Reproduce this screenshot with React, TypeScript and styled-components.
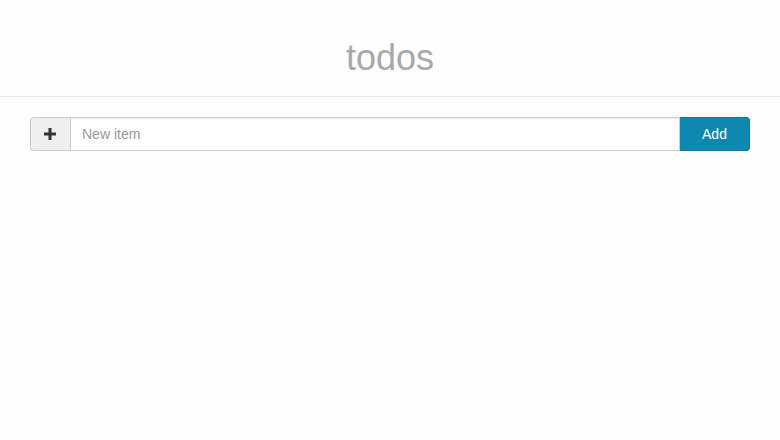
import styled, { createGlobalStyle } from "styled-components";

const Global = createGlobalStyle`
  html, body {
    margin: 0;
    padding: 0;
    background: #fefefe;
    font-family: "Liberation Sans", Arial, Helvetica, sans-serif;
    font-size: 14px;
    color: #333;
  }
`;

const Header = styled.header`
  height: 96px;
  border-bottom: 1px solid #e6e6e6;
  display: flex;
  align-items: center;
  justify-content: center;
`;

const Title = styled.h1`
  margin: 0;
  padding-top: 20px;
  font-size: 36px;
  font-weight: 400;
  color: #a9a9a9;
  line-height: 1;
`;

const Main = styled.main`
  padding: 20px 30px;
`;

const InputGroup = styled.form`
  display: flex;
  height: 34px;
`;

const Addon = styled.span`
  width: 39px;
  display: flex;
  align-items: center;
  justify-content: center;
  background: #eeeeee;
  border: 1px solid #cccccc;
  border-right: none;
  border-radius: 4px 0 0 4px;
  color: #333;
`;

const Field = styled.input`
  flex: 1;
  min-width: 0;
  box-sizing: border-box;
  height: 34px;
  padding: 6px 11px;
  border: 1px solid #cccccc;
  border-radius: 0;
  background: #fff;
  font-family: inherit;
  font-size: 14px;
  color: #555;
  outline: none;
  box-shadow: inset 0 1px 1px rgba(0, 0, 0, 0.075);

  &::placeholder {
    color: #999;
  }
`;

const AddButton = styled.button`
  width: 70px;
  height: 34px;
  border: 1px solid #0b7aa0;
  border-left: none;
  border-radius: 0 4px 4px 0;
  background: #0e88b1;
  color: #fff;
  font-family: inherit;
  font-size: 14px;
  cursor: pointer;
`;

function PlusIcon() {
  return (
    <svg width="14" height="14" viewBox="0 0 14 14" style={{ marginRight: 2 }}>
      <path d="M5.5 1h3v4.5H13v3H8.5V13h-3V8.5H1v-3h4.5z" fill="#333" />
    </svg>
  );
}

export default function App() {
  return (
    <>
      <Global />
      <Header>
        <Title>todos</Title>
      </Header>
      <Main>
        <InputGroup onSubmit={(e) => e.preventDefault()}>
          <Addon>
            <PlusIcon />
          </Addon>
          <Field placeholder="New item" />
          <AddButton type="submit">Add</AddButton>
        </InputGroup>
      </Main>
    </>
  );
}
